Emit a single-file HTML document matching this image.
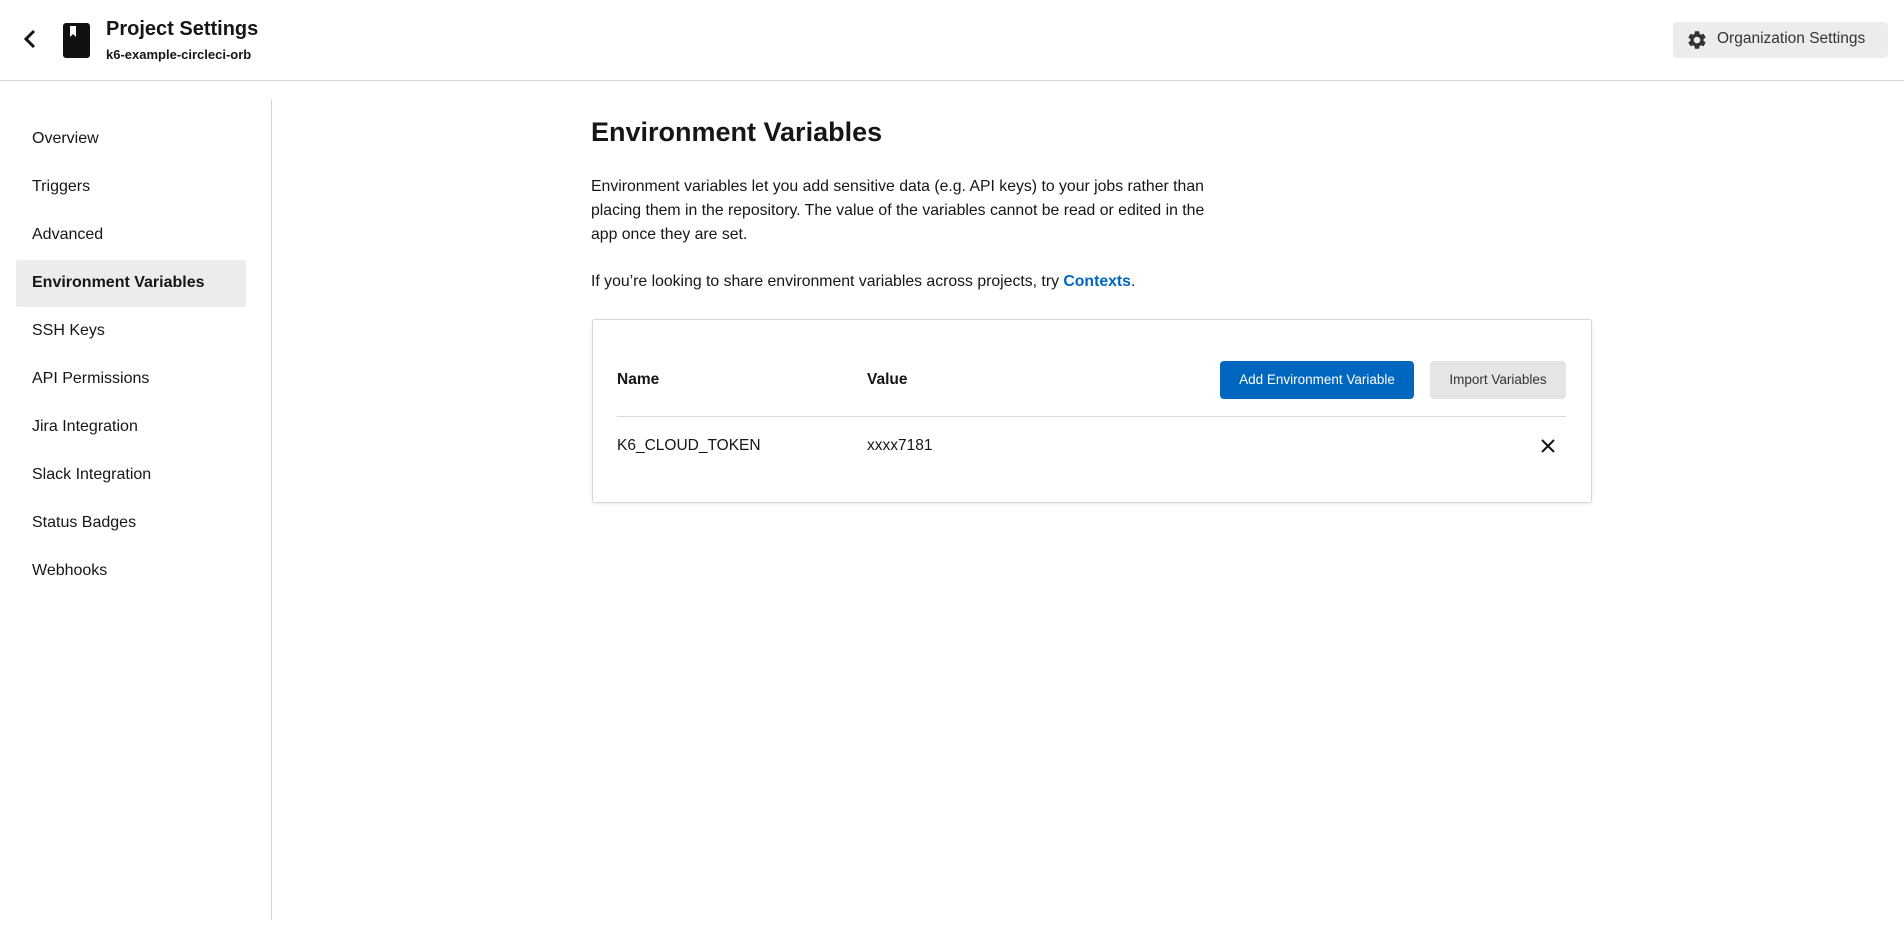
<!DOCTYPE html>
<html><head><meta charset="utf-8"><style>
*{box-sizing:border-box;margin:0;padding:0}
body{width:1904px;height:925px;background:#fff;font-family:"Liberation Sans",Arial,sans-serif;color:#161616;position:relative;overflow:hidden}
.abs{position:absolute}
.hdr{left:0;top:0;width:1904px;height:81px;border-bottom:1px solid #d4d4d4}
.side{left:271px;top:100px;width:1px;height:820px;background:#d4d4d4}
.nav{left:32px;font-size:16px;line-height:20px;color:#161616}
.p{left:591px;font-size:15.8px;line-height:24px;color:#161616}
</style></head><body>
<div class="abs hdr"></div>
<svg class="abs" style="left:20px;top:28px" width="20" height="22" viewBox="0 0 20 22"><path d="M14 3 L6 11 L14 19" fill="none" stroke="#161616" stroke-width="3"/></svg>
<svg class="abs" style="left:63px;top:23px" width="27" height="35" viewBox="0 0 27 35"><rect x="0" y="0" width="27" height="35" rx="3" fill="#111"/><path d="M7 3 h6 v11 l-3 -3 l-3 3 z" fill="#fff"/></svg>
<div class="abs" style="left:106px;top:18px;font-size:20px;font-weight:bold">Project Settings</div>
<div class="abs" style="left:106px;top:47px;font-size:13px;font-weight:bold;color:#161616">k6-example-circleci-orb</div>
<div class="abs" style="left:1673px;top:22px;width:215px;height:36px;background:#ececec;border-radius:4px"></div>
<svg class="abs" style="left:1686px;top:29px" width="22" height="22" viewBox="0 0 24 24"><path fill="#333" d="M19.14 12.94c.04-.3.06-.61.06-.94 0-.32-.02-.64-.07-.94l2.030-1.58a.49.49 0 0 0 .12-.61l-1.92-3.32a.49.49 0 0 0-.59-.22l-2.39.96c-.5-.38-1.030-.7-1.62-.94l-.36-2.54a.48.48 0 0 0-.48-.41h-3.84c-.24 0-.43.17-.47.41l-.36 2.54c-.59.24-1.13.57-1.62.94l-2.39-.96c-.22-.08-.47 0-.59.22L2.74 8.87c-.12.21-.08.47.12.61l2.03 1.58c-.05.3-.09.63-.09.94s.02.64.07.94l-2.03 1.58a.49.49 0 0 0-.12.61l1.92 3.32c.12.22.37.29.59.22l2.39-.96c.5.38 1.03.7 1.62.94l.36 2.54c.05.24.24.41.48.41h3.84c.24 0 .44-.17.47-.41l.36-2.54c.59-.24 1.13-.56 1.62-.94l2.39.96c.22.08.47 0 .59-.22l1.92-3.32c.12-.22.07-.47-.12-.61l-2.01-1.58zM12 15.6c-1.98 0-3.6-1.62-3.6-3.6s1.62-3.6 3.6-3.6 3.6 1.62 3.6 3.6-1.62 3.6-3.6 3.6z"/></svg>
<div class="abs" style="left:1717px;top:30px;font-size:15.5px;color:#333">Organization Settings</div>
<div class="abs side"></div>
<div class="abs" style="left:16px;top:260px;width:230px;height:47px;background:#ececec;border-radius:2px"></div>
<div class="abs nav" style="top:129px">Overview</div>
<div class="abs nav" style="top:177px">Triggers</div>
<div class="abs nav" style="top:225px">Advanced</div>
<div class="abs nav" style="top:273px;font-weight:bold">Environment Variables</div>
<div class="abs nav" style="top:321px">SSH Keys</div>
<div class="abs nav" style="top:369px">API Permissions</div>
<div class="abs nav" style="top:417px">Jira Integration</div>
<div class="abs nav" style="top:465px">Slack Integration</div>
<div class="abs nav" style="top:513px">Status Badges</div>
<div class="abs nav" style="top:561px">Webhooks</div>
<div class="abs" style="left:591px;top:117px;font-size:27px;font-weight:bold">Environment Variables</div>
<div class="abs p" style="top:175px;width:640px">Environment variables let you add sensitive data (e.g. API keys) to your jobs rather than placing them in the repository. The value of the variables cannot be read or edited in the app once they are set.</div>
<div class="abs p" style="top:270px">If you’re looking to share environment variables across projects, try <b style="color:#0067c0">Contexts</b>.</div>
<div class="abs" style="left:592px;top:319px;width:1000px;height:184px;border:1px solid #d9d9d9;border-radius:3px;box-shadow:0 1px 3px rgba(0,0,0,.1)"></div>
<div class="abs" style="left:617px;top:371px;font-size:15.5px;font-weight:bold">Name</div>
<div class="abs" style="left:867px;top:371px;font-size:15.5px;font-weight:bold">Value</div>
<div class="abs" style="left:1220px;top:361px;width:194px;height:38px;background:#0067c0;border-radius:4px;color:#fff;font-size:13.5px;line-height:38px;text-align:center">Add Environment Variable</div>
<div class="abs" style="left:1430px;top:361px;width:136px;height:38px;background:#e5e5e5;border-radius:4px;color:#333;font-size:13.5px;line-height:38px;text-align:center">Import Variables</div>
<div class="abs" style="left:617px;top:416px;width:949px;height:1px;background:#d9d9d9"></div>
<div class="abs" style="left:617px;top:437px;font-size:15.5px">K6_CLOUD_TOKEN</div>
<div class="abs" style="left:867px;top:437px;font-size:15.5px">xxxx7181</div>
<svg class="abs" style="left:1541px;top:439px" width="14" height="14" viewBox="0 0 14 14"><path d="M1 1L13 13M13 1L1 13" stroke="#161616" stroke-width="2"/></svg>
</body></html>
